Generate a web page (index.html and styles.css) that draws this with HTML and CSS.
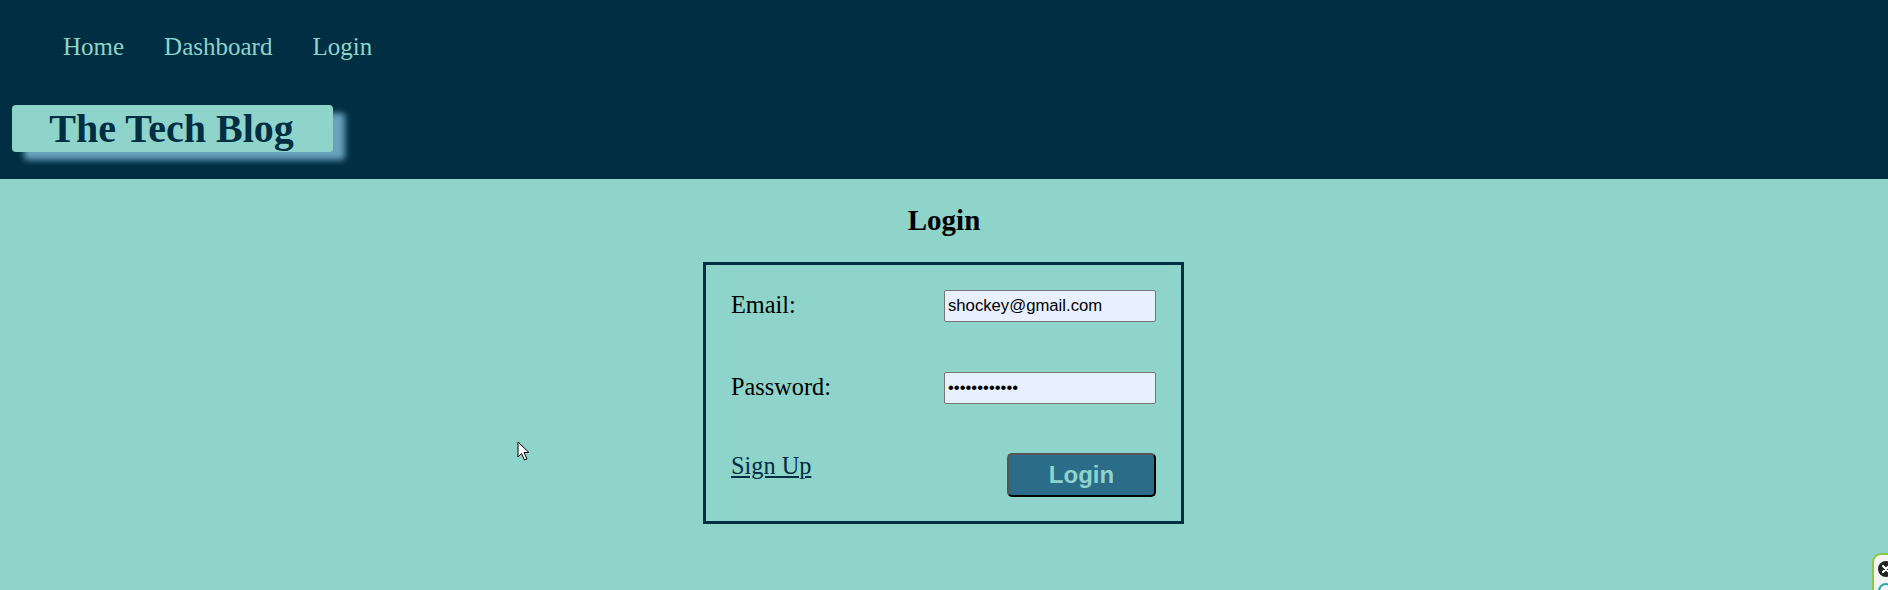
FILE: index.html
```html
<!DOCTYPE html>
<html lang="en">
<head>
<meta charset="utf-8">
<title>The Tech Blog</title>
<link rel="stylesheet" href="styles.css">
</head>
<body>
<header class="site-header">
  <nav class="nav">
    <a class="nav-link" href="#">Home</a>
    <a class="nav-link" href="#">Dashboard</a>
    <a class="nav-link" href="#">Login</a>
  </nav>
  <h1 class="brand">The Tech Blog</h1>
</header>
<main class="main">
  <h2 class="page-title">Login</h2>
  <form class="login-form">
    <div class="form-row">
      <label class="form-label" for="email">Email:</label>
      <input class="form-input" id="email" type="email" value="shockey@gmail.com">
    </div>
    <div class="form-row">
      <label class="form-label" for="password">Password:</label>
      <input class="form-input" id="password" type="password" value="passwordabc1">
    </div>
    <div class="form-row form-row-last">
      <a class="signup-link" href="#">Sign Up</a>
      <button class="login-btn" type="button">Login</button>
    </div>
  </form>
</main>
<svg class="cursor" width="14" height="22" viewBox="0 0 14 22">
  <path d="M1 1 L1 16 L4.5 12.5 L7.5 19 L10 18 L7 11.5 L12 11.5 Z" fill="#fff" stroke="#000" stroke-width="1"/>
</svg>
<div class="widget">
  <span class="widget-close">
    <svg width="16" height="16" viewBox="0 0 16 16">
      <circle cx="8" cy="8" r="8" fill="#222"/>
      <path d="M5 5 L11 11 M11 5 L5 11" stroke="#fff" stroke-width="2.2" stroke-linecap="round"/>
    </svg>
  </span>
  <span class="widget-ring"></span>
</div>
</body>
</html>
```
FILE: styles.css
```css
html, body {
  margin: 0;
  padding: 0;
}
body {
  font-family: "Liberation Serif", "Times New Roman", serif;
  background: #8fd4cb;
  min-height: 590px;
  overflow: hidden;
}
.site-header {
  background: #002e42;
  padding: 32px 0 27px 12px;
}
.nav {
  display: flex;
  gap: 40px;
  padding-left: 51px;
  height: 29px;
  line-height: 29px;
}
.nav-link {
  color: #8fd4cb;
  text-decoration: none;
  font-size: 25px;
}
.brand {
  margin: 44px 0 0 0;
  width: 321px;
  height: 47px;
  line-height: 47px;
  box-sizing: border-box;
  text-align: center;
  padding-right: 2px;
  font-size: 40px;
  font-weight: bold;
  color: #002e42;
  background: #8fd4cb;
  border-radius: 4px;
  box-shadow: 12px 8px 6px #6aa3bd;
}
.main {
  padding-top: 25px;
  display: flex;
  flex-direction: column;
  align-items: center;
}
.page-title {
  margin: 0;
  font-size: 29px;
  font-weight: bold;
  color: #000;
  line-height: 33px;
}
.login-form {
  margin: 25px 1px 0 0;
  width: 481px;
  box-sizing: border-box;
  border: 3px solid #002e42;
  padding: 25px 25px 24px 25px;
  display: flex;
  flex-direction: column;
  gap: 50px;
}
.form-row {
  display: flex;
  justify-content: space-between;
  align-items: flex-start;
}
.form-row-last {
  margin-top: -1px;
}
.form-label {
  font-size: 24.3px;
  color: #000;
  margin-top: 1px;
  line-height: 28px;
}
.form-input {
  width: 212px;
  height: 32px;
  box-sizing: border-box;
  border: 1px solid #767676;
  border-radius: 2px;
  background: #e8f0fe;
  font-family: "Liberation Sans", Arial, sans-serif;
  font-size: 16.7px;
  padding: 1px 3px;
  color: #000;
}
.signup-link {
  font-size: 24.3px;
  line-height: 28px;
  color: #002e42;
  text-decoration: underline;
  margin-top: -1px;
}
.login-btn {
  width: 149px;
  height: 44px;
  box-sizing: border-box;
  background: #2b6c88;
  color: #8fd4cb;
  font-family: "Liberation Sans", Arial, sans-serif;
  font-size: 24px;
  font-weight: bold;
  border: 2px solid;
  border-color: #555 #000 #000 #555;
  border-radius: 5px;
  padding: 0;
}
.cursor {
  position: absolute;
  left: 517px;
  top: 441px;
}
.widget {
  position: fixed;
  left: 1872px;
  top: 553px;
  width: 40px;
  height: 60px;
  box-sizing: border-box;
  border: 2px solid #8dc63f;
  border-radius: 9px;
  background: #f4f4f4;
  padding: 6px 0 0 4px;
}
.widget-close {
  display: block;
  width: 16px;
  height: 16px;
}
.widget-close svg {
  display: block;
}
.widget-ring {
  display: block;
  margin-top: 6px;
  width: 16px;
  height: 16px;
  box-sizing: border-box;
  border: 2px solid #2aa7a0;
  border-radius: 50%;
}
```
